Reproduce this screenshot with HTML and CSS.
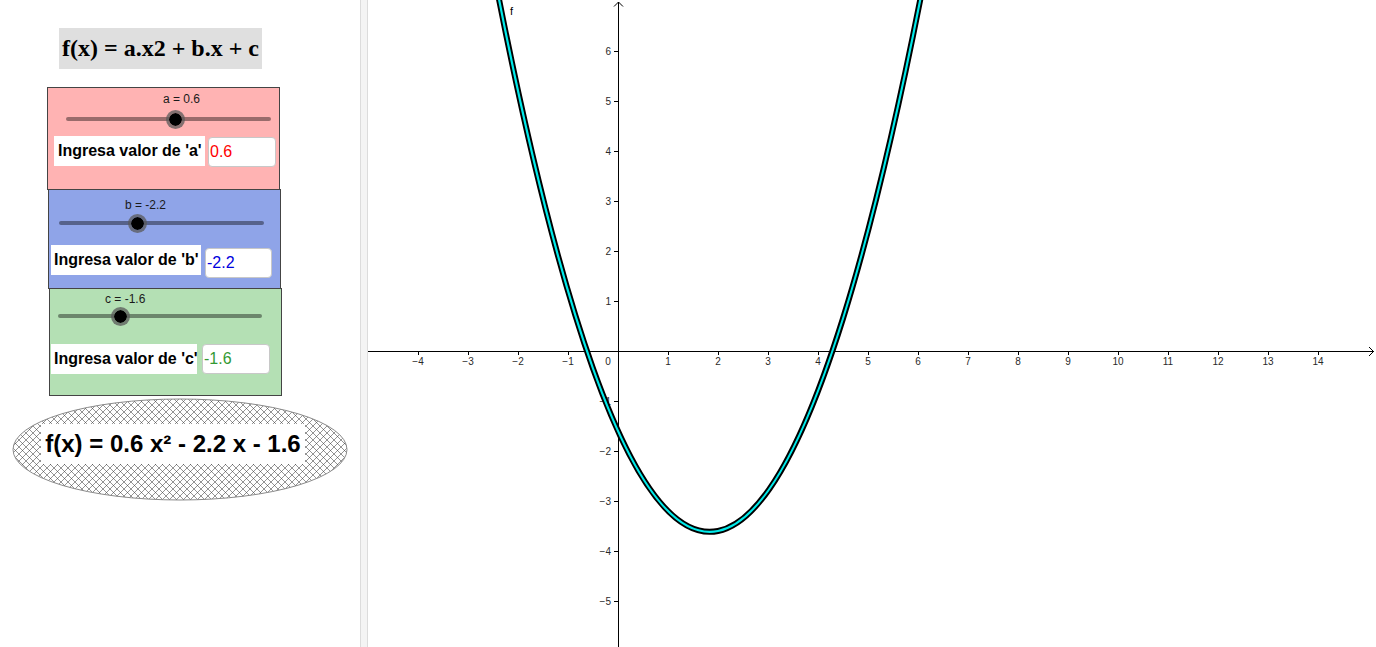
FILE: index.html
```html
<!DOCTYPE html>
<html lang="es">
<head>
<meta charset="utf-8">
<title>f(x) = a.x2 + b.x + c</title>
<link rel="stylesheet" href="styles.css">
</head>
<body>
<div class="app">
  <aside class="algebra">
    <div class="title">f(x) = a.x2 + b.x + c</div>

    <section class="panel panel-a">
      <div class="slider-label">a = 0.6</div>
      <div class="track"><span class="knob" style="left:53.2%"></span></div>
      <div class="entry">
        <span class="entry-label">Ingresa valor de 'a'</span>
        <span class="entry-input">0.6</span>
      </div>
    </section>

    <section class="panel panel-b">
      <div class="slider-label">b = -2.2</div>
      <div class="track"><span class="knob" style="left:38.5%"></span></div>
      <div class="entry">
        <span class="entry-label">Ingresa valor de 'b'</span>
        <span class="entry-input">-2.2</span>
      </div>
    </section>

    <section class="panel panel-c">
      <div class="slider-label">c = -1.6</div>
      <div class="track"><span class="knob" style="left:30.4%"></span></div>
      <div class="entry">
        <span class="entry-label">Ingresa valor de 'c'</span>
        <span class="entry-input">-1.6</span>
      </div>
    </section>

    <div class="formula">
      <svg class="formula-bg" width="336" height="103" viewBox="0 0 336 103">
        <defs>
          <pattern id="hatch" width="7" height="7" patternUnits="userSpaceOnUse">
            <rect width="7" height="7" fill="#ffffff"/>
            <path d="M0 7 L7 0 M-1 1 L1 -1 M6 8 L8 6" stroke="#3a3a3a" stroke-width="0.55"/>
            <path d="M0 0 L7 7 M-1 6 L1 8 M6 -1 L8 1" stroke="#3a3a3a" stroke-width="0.55"/>
          </pattern>
        </defs>
        <ellipse cx="168" cy="51.5" rx="167" ry="50.5" fill="url(#hatch)" stroke="#8a8a8a" stroke-width="1"/>
      </svg>
      <div class="formula-text">f(x) = 0.6 x² - 2.2 x - 1.6</div>
    </div>
  </aside>

  <div class="divider"></div>

  <main class="graphics">
    <svg class="plot" width="1008" height="647" viewBox="0 0 1008 647">
      <g class="axes" stroke="#000" stroke-width="1" fill="none">
        <line x1="0" y1="351.5" x2="1006" y2="351.5"/>
        <polyline points="1001,347 1005.5,351.5 1001,356"/>
        <line x1="250.5" y1="2" x2="250.5" y2="647"/>
        <polyline points="246,6.5 250.5,2 255,6.5"/>
        <path d="M50.5 351v4 M100.5 351v4 M150.5 351v4 M200.5 351v4 M300.5 351v4 M350.5 351v4 M400.5 351v4 M450.5 351v4 M500.5 351v4 M550.5 351v4 M600.5 351v4 M650.5 351v4 M700.5 351v4 M750.5 351v4 M800.5 351v4 M850.5 351v4 M900.5 351v4 M950.5 351v4"/>
        <path d="M246 51.5h4 M246 101.5h4 M246 151.5h4 M246 201.5h4 M246 251.5h4 M246 301.5h4 M246 401.5h4 M246 451.5h4 M246 501.5h4 M246 551.5h4 M246 601.5h4"/>
      </g>
      <g class="ticks-x" text-anchor="middle">
        <text x="50" y="365">−4</text>
        <text x="100" y="365">−3</text>
        <text x="150" y="365">−2</text>
        <text x="200" y="365">−1</text>
        <text x="240" y="365">0</text>
        <text x="300" y="365">1</text>
        <text x="350" y="365">2</text>
        <text x="400" y="365">3</text>
        <text x="450" y="365">4</text>
        <text x="500" y="365">5</text>
        <text x="550" y="365">6</text>
        <text x="600" y="365">7</text>
        <text x="650" y="365">8</text>
        <text x="700" y="365">9</text>
        <text x="750" y="365">10</text>
        <text x="800" y="365">11</text>
        <text x="850" y="365">12</text>
        <text x="900" y="365">13</text>
        <text x="950" y="365">14</text>
      </g>
      <g class="ticks-y" text-anchor="end">
        <text x="243" y="55">6</text>
        <text x="243" y="105">5</text>
        <text x="243" y="155">4</text>
        <text x="243" y="205">3</text>
        <text x="243" y="255">2</text>
        <text x="243" y="305">1</text>
        <text x="243" y="405">−1</text>
        <text x="243" y="455">−2</text>
        <text x="243" y="505">−3</text>
        <text x="243" y="555">−4</text>
        <text x="243" y="605">−5</text>
      </g>
      <path d="M100 -169 Q350 1281 600 -269" fill="none" stroke="#000" stroke-width="6"/>
      <path d="M100 -169 Q350 1281 600 -269" fill="none" stroke="#00eaea" stroke-width="2.2"/>
      <text class="curve-name" x="142" y="15">f</text>
    </svg>
  </main>
</div>
</body>
</html>
```

FILE: styles.css
```css
* { box-sizing: border-box; }

html, body {
  margin: 0;
  padding: 0;
  background: #ffffff;
  width: 1376px;
  height: 647px;
  overflow: hidden;
}

body {
  font-family: "Liberation Sans", Arial, sans-serif;
  color: #000;
}

.app {
  display: flex;
  width: 1376px;
  height: 647px;
}

/* left algebra / controls column */
.algebra {
  width: 360px;
  flex: none;
  display: flex;
  flex-direction: column;
  align-items: flex-start;
}

.title {
  margin-top: 28px;
  margin-left: 59px;
  width: 203px;
  height: 41px;
  background: #dfdfdf;
  font-family: "Liberation Serif", "Times New Roman", serif;
  font-weight: bold;
  font-size: 24px;
  line-height: 41px;
  text-align: center;
  white-space: nowrap;
}

.panel {
  width: 233px;
  border: 1px solid #444;
  display: flex;
  flex-direction: column;
  align-items: flex-start;
}

.panel-a {
  margin-top: 18px;
  margin-left: 47px;
  height: 103px;
  background: #ffb3b3;
}
.panel-b {
  margin-top: -1px;
  margin-left: 48px;
  height: 100px;
  background: #8fa4e8;
}
.panel-c {
  margin-top: -1px;
  margin-left: 49px;
  height: 108px;
  background: #b4e0b4;
}

.slider-label {
  height: 12px;
  line-height: 12px;
  font-size: 12px;
  color: #1a1a1a;
  white-space: nowrap;
}

.track {
  position: relative;
  height: 4px;
  border-radius: 2px;
  background: rgba(0, 0, 0, 0.4);
}

.knob {
  position: absolute;
  top: 50%;
  width: 19px;
  height: 19px;
  margin-left: -9.5px;
  margin-top: -9.5px;
  border-radius: 50%;
  background: #000;
  border: 3px solid rgba(90, 90, 90, 0.75);
  background-clip: padding-box;
}

.entry {
  display: flex;
  align-items: flex-start;
}

.entry-label {
  height: 30px;
  background: #ffffff;
  font-weight: bold;
  font-size: 16px;
  line-height: 30px;
  padding-left: 4px;
  white-space: nowrap;
}

.entry-input {
  height: 30px;
  background: #ffffff;
  border: 1px solid #c8c8c8;
  border-radius: 4px;
  font-size: 16px;
  line-height: 28px;
  padding-left: 1px;
}

/* panel a geometry */
.panel-a .slider-label { margin-top: 5px; margin-left: 115px; }
.panel-a .track { margin-top: 12px; margin-left: 18px; width: 205px; }
.panel-a .entry { margin-top: 15px; margin-left: 6px; }
.panel-a .entry-label { width: 151px; }
.panel-a .entry-input { width: 68px; margin-left: 3px; margin-top: 1px; color: #ff0000; }

/* panel b geometry */
.panel-b .slider-label { margin-top: 9px; margin-left: 76px; }
.panel-b .track { margin-top: 10px; margin-left: 10px; width: 205px; }
.panel-b .entry { margin-top: 20px; margin-left: 2px; }
.panel-b .entry-label { width: 150px; padding-left: 3px; }
.panel-b .entry-input { width: 67px; margin-left: 4px; margin-top: 3px; color: #0000dd; }

/* panel c geometry */
.panel-c .slider-label { margin-top: 4px; margin-left: 55px; }
.panel-c .track { margin-top: 9px; margin-left: 8px; width: 204px; }
.panel-c .entry { margin-top: 26px; margin-left: 1px; }
.panel-c .entry-label { width: 146px; padding-left: 3px; }
.panel-c .entry-input { width: 68px; margin-left: 5px; color: #339933; }

/* hatched ellipse with result formula */
.formula {
  position: relative;
  margin-top: 2px;
  margin-left: 12px;
  width: 336px;
  height: 103px;
  display: flex;
  align-items: center;
  justify-content: center;
}

.formula-bg {
  position: absolute;
  left: 0;
  top: 0;
}

.formula-text {
  position: relative;
  margin-top: -12px;
  margin-left: -14px;
  background: #ffffff;
  padding: 4px 4px;
  font-weight: bold;
  font-size: 24px;
  line-height: 32px;
  white-space: nowrap;
}

/* divider between views */
.divider {
  width: 8px;
  flex: none;
  height: 647px;
  background: #f4f4f4;
  border-left: 1px solid #dcdcdc;
  border-right: 1px solid #dcdcdc;
}

/* graphics view */
.graphics {
  flex: 1;
  height: 647px;
  overflow: hidden;
}

.plot {
  display: block;
  overflow: hidden;
}

.plot text {
  font-family: "Liberation Sans", Arial, sans-serif;
  font-size: 10px;
  fill: #2a2a2a;
}

.plot .curve-name {
  font-size: 11px;
  fill: #000;
}
```
